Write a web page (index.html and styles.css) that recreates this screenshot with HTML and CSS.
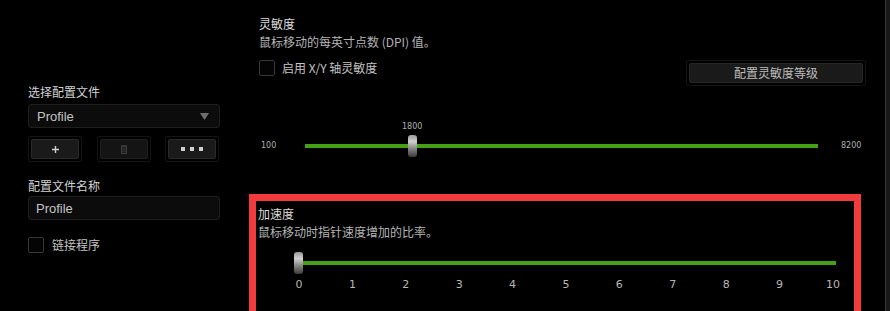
FILE: index.html
```html
<!DOCTYPE html>
<html lang="zh-CN">
<head>
<meta charset="utf-8">
<title>Mouse settings</title>
<link rel="stylesheet" href="styles.css">
</head>
<body>
<div class="app">
  <aside class="side">
    <div class="label">选择配置文件</div>
    <div class="select">
      <span>Profile</span>
      <svg class="caret" width="9" height="7" viewBox="0 0 9 7"><path d="M0 0H9L4.5 7Z" fill="#6e6e6e"/></svg>
    </div>
    <div class="btn-row">
      <div class="frame"><div class="sbtn"><svg width="7" height="7" viewBox="0 0 7 7"><path d="M3.5 0V7M0 3.5H7" stroke="#d0d0d0" stroke-width="1.4"/></svg></div></div>
      <div class="frame"><div class="sbtn dim"><svg width="6" height="9" viewBox="0 0 6 9"><rect x="0.5" y="1.5" width="5" height="7" fill="none" stroke="#3c3c3c"/><path d="M2 2.5V7.5M4 2.5V7.5M0 0.7H6" stroke="#3c3c3c"/></svg></div></div>
      <div class="frame"><div class="sbtn"><svg width="22" height="4" viewBox="0 0 22 4"><rect x="0" y="0" width="4" height="4" fill="#d0d0d0"/><rect x="9" y="0" width="4" height="4" fill="#d0d0d0"/><rect x="18" y="0" width="4" height="4" fill="#d0d0d0"/></svg></div></div>
    </div>
    <div class="label label2">配置文件名称</div>
    <div class="input">Profile</div>
    <label class="check side-check"><span class="box"></span><span>链接程序</span></label>
  </aside>

  <main class="main">
    <section class="sens">
      <div class="title">灵敏度</div>
      <div class="desc">鼠标移动的每英寸点数 (DPI) 值。</div>
      <div class="opt-row">
        <label class="check"><span class="box"></span><span>启用 X/Y 轴灵敏度</span></label>
        <div class="wide-frame"><div class="wide-btn">配置灵敏度等级</div></div>
      </div>
      <div class="dpi-row">
        <span class="tiny min">100</span>
        <div class="dpi-track">
          <div class="line"></div>
          <div class="thumb-wrap" style="left:20.99%">
            <span class="tiny val">1800</span>
            <div class="thumb"></div>
          </div>
        </div>
        <span class="tiny max">8200</span>
      </div>
    </section>

    <section class="accel">
      <div class="title">加速度</div>
      <div class="desc">鼠标移动时指针速度增加的比率。</div>
      <div class="acc-track">
        <div class="line"></div>
        <div class="thumb acc-thumb"></div>
      </div>
      <div class="ticks">
        <span>0</span><span>1</span><span>2</span><span>3</span><span>4</span><span>5</span><span>6</span><span>7</span><span>8</span><span>9</span><span>10</span>
      </div>
    </section>
  </main>

  <div class="scroll"></div>
</div>
</body>
</html>
```
FILE: styles.css
```css
html, body {
  margin: 0;
  padding: 0;
  background: #000;
  height: 311px;
  overflow: hidden;
}
body {
  font-family: "Noto Sans CJK SC", "Liberation Sans", sans-serif;
  font-size: 12px;
  color: #c8c8c8;
}
.app {
  display: flex;
  width: 890px;
  height: 311px;
}

/* left side */
.side {
  width: 249px;
  box-sizing: border-box;
  padding: 84px 29px 0 28px;
  flex-shrink: 0;
}
.label {
  line-height: 16px;
  color: #d2d2d2;
  margin-bottom: 4px;
}
.label2 {
  margin-top: 16px;
  margin-bottom: 2px;
}
.select, .input {
  height: 24px;
  box-sizing: border-box;
  border: 1px solid #1f1f1f;
  border-radius: 3px;
  background: #0c0c0c;
  font-family: "Liberation Sans", sans-serif;
  font-size: 13px;
  color: #c4c4c4;
  display: flex;
  align-items: center;
  justify-content: space-between;
  padding: 0 10px 0 8px;
}
.input {
  padding-left: 7px;
}
.caret {
  display: block;
}
.btn-row {
  display: flex;
  justify-content: space-between;
  margin-top: 8px;
  width: 191px;
}
.frame {
  width: 54px;
  height: 26px;
  box-sizing: border-box;
  border: 1px solid #141414;
  border-radius: 2px;
  padding: 2px;
}
.sbtn {
  height: 100%;
  box-sizing: border-box;
  border: 1px solid #2a2a2a;
  border-radius: 2px;
  background: #1a1a1a;
  display: flex;
  align-items: center;
  justify-content: center;
}
.sbtn svg { display: block; }
.sbtn.dim {
  background: #141414;
  border-color: #202020;
}
.check {
  display: flex;
  align-items: center;
  gap: 8px;
  color: #c4c4c4;
  line-height: 16px;
}
.box {
  width: 16px;
  height: 16px;
  box-sizing: border-box;
  border: 1px solid #363636;
  border-radius: 2px;
  background: #040404;
  flex-shrink: 0;
}
.side-check {
  margin-top: 17px;
}

/* main */
.main {
  width: 636px;
  flex-shrink: 0;
}
.sens {
  padding: 15px 19px 0 10px;
}
.title {
  line-height: 18px;
  color: #dcdcdc;
}
.desc {
  line-height: 18px;
  color: #b4b4b4;
}
.opt-row {
  display: flex;
  justify-content: space-between;
  align-items: flex-start;
  margin-top: 9px;
}
.opt-row .check {
  gap: 7px;
}
.wide-frame {
  width: 180px;
  height: 26px;
  box-sizing: border-box;
  border: 1px solid #131313;
  border-radius: 2px;
  padding: 2px;
}
.wide-btn {
  height: 100%;
  box-sizing: border-box;
  border: 1px solid #262626;
  border-radius: 2px;
  background: #1a1a1a;
  color: #bdbdbd;
  display: flex;
  align-items: center;
  justify-content: center;
  line-height: 1;
}
.dpi-row {
  display: flex;
  align-items: center;
  height: 22px;
  margin-top: 49px;
}
.tiny {
  font-family: "DejaVu Sans", sans-serif;
  font-size: 8px;
  color: #b0b0b0;
  line-height: 10px;
}
.min {
  width: 44px;
  padding-left: 2px;
}
.max {
  margin-left: 23px;
}
.dpi-track, .acc-track {
  position: relative;
  height: 22px;
  display: flex;
  align-items: center;
}
.dpi-track {
  width: 513px;
}
.line {
  width: 100%;
  height: 4px;
  background: #45a015;
}
.thumb-wrap {
  position: absolute;
  top: 0;
  width: 9px;
  height: 22px;
  margin-left: -5px;
}
.val {
  position: absolute;
  bottom: 25px;
  left: 50%;
  transform: translateX(-50%);
}
.thumb {
  width: 9px;
  height: 22px;
  border-radius: 3px;
  background: linear-gradient(#9a9a9a 0%, #cfcfcf 30%, #8a8a8a 60%, #3a3a3a 100%);
}

/* acceleration */
.accel {
  width: 612px;
  box-sizing: border-box;
  border: 7px solid #f23c3c;
  border-bottom: none;
  height: 130px;
  margin-top: 37px;
  padding: 4px 0 0 2px;
}
.acc-track {
  width: 536px;
  margin-left: 42px;
  margin-top: 11px;
}
.acc-thumb {
  position: absolute;
  left: -6px;
  top: 0;
}
.ticks {
  display: flex;
  justify-content: space-between;
  width: 548px;
  margin-left: 34px;
  margin-top: 3px;
  line-height: 16px;
  font-family: "DejaVu Sans", sans-serif;
  font-size: 11px;
  color: #b8b8b8;
}
.ticks span {
  width: 14px;
  text-align: center;
}

.scroll {
  width: 5px;
  margin-left: 0;
  border-left: 1px solid #3a3a3a;
  background: #181818;
  box-sizing: border-box;
}
```
